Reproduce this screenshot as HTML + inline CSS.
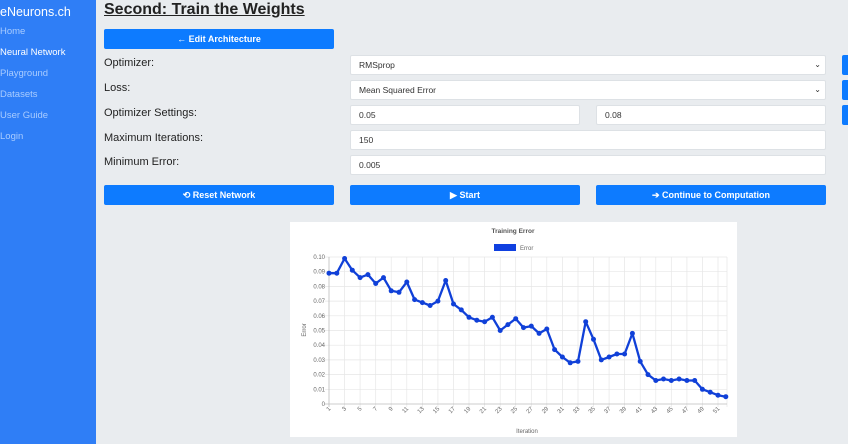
<!DOCTYPE html>
<html><head><meta charset="utf-8"><style>
*{margin:0;padding:0;box-sizing:border-box}
body{width:848px;height:444px;overflow:hidden;background:#e9ecef;font-family:"Liberation Sans",sans-serif;position:relative}
.side{position:absolute;left:0;top:0;width:96px;height:444px;background:#2f7ef6}
.side div{position:absolute;left:0;font-size:9.5px;color:#a9ccff}
.brand{color:#fff!important;font-size:12.5px!important;top:5px}
.a{position:absolute}
h1{position:absolute;left:104px;top:1px;font-size:16px;font-weight:bold;color:#222;text-decoration:underline}
.btn{position:absolute;background:#0d7bff;color:#fff;font-size:9px;font-weight:bold;text-align:center;line-height:20px;height:20px;border-radius:2px}
.lbl{position:absolute;left:104px;font-size:11px;color:#222}
.in{position:absolute;background:#fff;border:1px solid #dde1e5;border-radius:2px;height:20px;font-size:8.5px;color:#333;line-height:18px;padding-left:8px}
.tab{position:absolute;left:842px;width:8px;height:20px;background:#0d7bff;border-radius:2px}
.chev{position:absolute;right:4px;top:0;font-size:8px}
</style></head><body>
<div class="side">
<div class="brand">eNeurons.ch</div>
<div style="top:26px">Home</div>
<div style="top:47px;color:#fff">Neural Network</div>
<div style="top:68px">Playground</div>
<div style="top:89px">Datasets</div>
<div style="top:110px">User Guide</div>
<div style="top:131px">Login</div>
</div>
<h1>Second: Train the Weights</h1>
<div class="btn" style="left:104px;top:29px;width:230px">← Edit Architecture</div>
<div class="lbl" style="top:57px">Optimizer:</div>
<div class="lbl" style="top:82px">Loss:</div>
<div class="lbl" style="top:107px">Optimizer Settings:</div>
<div class="lbl" style="top:132px">Maximum Iterations:</div>
<div class="lbl" style="top:156px">Minimum Error:</div>
<div class="in" style="left:350px;top:55px;width:476px">RMSprop<span class="chev">⌄</span></div>
<div class="in" style="left:350px;top:80px;width:476px">Mean Squared Error<span class="chev">⌄</span></div>
<div class="in" style="left:350px;top:105px;width:230px">0.05</div>
<div class="in" style="left:596px;top:105px;width:230px">0.08</div>
<div class="in" style="left:350px;top:130px;width:476px">150</div>
<div class="in" style="left:350px;top:155px;width:476px">0.005</div>
<div class="tab" style="top:55px"></div><div class="tab" style="top:80px"></div><div class="tab" style="top:105px"></div>
<div class="btn" style="left:104px;top:185px;width:230px">⟲ Reset Network</div>
<div class="btn" style="left:350px;top:185px;width:230px">▶ Start</div>
<div class="btn" style="left:596px;top:185px;width:230px">➔ Continue to Computation</div>
<div class="a" style="left:290px;top:222px;width:447px;height:215px;background:#fff"></div>
<svg class="a" style="left:0;top:0" width="848" height="444" font-family="Liberation Sans,sans-serif">
<text x="513" y="233" font-size="6.5" fill="#555" text-anchor="middle" font-weight="bold">Training Error</text>
<rect x="494" y="244" width="22" height="7" fill="#1040e0"/>
<text x="520" y="250" font-size="6" fill="#666">Error</text>
<g stroke="#e6e6e6" stroke-width="0.7">
<line x1="325" y1="257" x2="727" y2="257"/><line x1="325" y1="271.7" x2="727" y2="271.7"/><line x1="325" y1="286.4" x2="727" y2="286.4"/><line x1="325" y1="301.1" x2="727" y2="301.1"/><line x1="325" y1="315.8" x2="727" y2="315.8"/><line x1="325" y1="330.5" x2="727" y2="330.5"/><line x1="325" y1="345.2" x2="727" y2="345.2"/><line x1="325" y1="359.9" x2="727" y2="359.9"/><line x1="325" y1="374.6" x2="727" y2="374.6"/><line x1="325" y1="389.3" x2="727" y2="389.3"/>
<line x1="344.6" y1="257" x2="344.6" y2="407"/><line x1="360.1" y1="257" x2="360.1" y2="407"/><line x1="375.7" y1="257" x2="375.7" y2="407"/><line x1="391.2" y1="257" x2="391.2" y2="407"/><line x1="406.8" y1="257" x2="406.8" y2="407"/><line x1="422.4" y1="257" x2="422.4" y2="407"/><line x1="437.9" y1="257" x2="437.9" y2="407"/><line x1="453.5" y1="257" x2="453.5" y2="407"/><line x1="469" y1="257" x2="469" y2="407"/><line x1="484.6" y1="257" x2="484.6" y2="407"/><line x1="500.2" y1="257" x2="500.2" y2="407"/><line x1="515.7" y1="257" x2="515.7" y2="407"/><line x1="531.3" y1="257" x2="531.3" y2="407"/><line x1="546.8" y1="257" x2="546.8" y2="407"/><line x1="562.4" y1="257" x2="562.4" y2="407"/><line x1="578" y1="257" x2="578" y2="407"/><line x1="593.5" y1="257" x2="593.5" y2="407"/><line x1="609.1" y1="257" x2="609.1" y2="407"/><line x1="624.6" y1="257" x2="624.6" y2="407"/><line x1="640.2" y1="257" x2="640.2" y2="407"/><line x1="655.8" y1="257" x2="655.8" y2="407"/><line x1="671.3" y1="257" x2="671.3" y2="407"/><line x1="686.9" y1="257" x2="686.9" y2="407"/><line x1="702.4" y1="257" x2="702.4" y2="407"/><line x1="718" y1="257" x2="718" y2="407"/><line x1="727" y1="257" x2="727" y2="407"/>
</g>
<line x1="329" y1="257" x2="329" y2="407" stroke="#bbb" stroke-width="0.8"/>
<line x1="325" y1="404" x2="727" y2="404" stroke="#bbb" stroke-width="0.8"/>
<g font-size="6" fill="#666" text-anchor="end">
<text x="325" y="259">0.10</text><text x="325" y="273.7">0.09</text><text x="325" y="288.4">0.08</text><text x="325" y="303.1">0.07</text><text x="325" y="317.8">0.06</text><text x="325" y="332.5">0.05</text><text x="325" y="347.2">0.04</text><text x="325" y="361.9">0.03</text><text x="325" y="376.6">0.02</text><text x="325" y="391.3">0.01</text><text x="325" y="406">0</text>
</g>
<g font-size="6" fill="#666" text-anchor="end">
<text transform="translate(331,409) rotate(-45)">1</text><text transform="translate(346.6,409) rotate(-45)">3</text><text transform="translate(362.1,409) rotate(-45)">5</text><text transform="translate(377.7,409) rotate(-45)">7</text><text transform="translate(393.2,409) rotate(-45)">9</text><text transform="translate(408.8,409) rotate(-45)">11</text><text transform="translate(424.4,409) rotate(-45)">13</text><text transform="translate(439.9,409) rotate(-45)">15</text><text transform="translate(455.5,409) rotate(-45)">17</text><text transform="translate(471,409) rotate(-45)">19</text><text transform="translate(486.6,409) rotate(-45)">21</text><text transform="translate(502.2,409) rotate(-45)">23</text><text transform="translate(517.7,409) rotate(-45)">25</text><text transform="translate(533.3,409) rotate(-45)">27</text><text transform="translate(548.8,409) rotate(-45)">29</text><text transform="translate(564.4,409) rotate(-45)">31</text><text transform="translate(580,409) rotate(-45)">33</text><text transform="translate(595.5,409) rotate(-45)">35</text><text transform="translate(611.1,409) rotate(-45)">37</text><text transform="translate(626.6,409) rotate(-45)">39</text><text transform="translate(642.2,409) rotate(-45)">41</text><text transform="translate(657.8,409) rotate(-45)">43</text><text transform="translate(673.3,409) rotate(-45)">45</text><text transform="translate(688.9,409) rotate(-45)">47</text><text transform="translate(704.4,409) rotate(-45)">49</text><text transform="translate(720,409) rotate(-45)">51</text>
</g>
<text x="527" y="433" font-size="6" fill="#666" text-anchor="middle">Iteration</text>
<text transform="translate(306,330) rotate(-90)" font-size="6" fill="#666" text-anchor="middle">Error</text>
<polyline fill="none" stroke="#1040d8" stroke-width="2.3" stroke-linejoin="round" points="329,273.2 336.8,273.2 344.6,258.5 352.3,270.2 360.1,277.6 367.9,274.6 375.7,283.5 383.5,277.6 391.2,290.8 399,292.3 406.8,282 414.6,299.6 422.4,302.6 430.1,305.5 437.9,301.1 445.7,280.5 453.5,304 461.3,309.9 469,317.3 476.8,320.2 484.6,321.7 492.4,317.3 500.2,330.5 507.9,324.6 515.7,318.7 523.5,327.6 531.3,326.1 539.1,333.4 546.8,329 554.6,349.6 562.4,357 570.2,362.8 578,361.4 585.7,321.7 593.5,339.3 601.3,359.9 609.1,357 616.9,354 624.6,354 632.4,333.4 640.2,361.4 648,374.6 655.8,380.5 663.5,379 671.3,380.5 679.1,379 686.9,380.5 694.7,380.5 702.4,389.3 710.2,392.2 718,395.2 725.8,396.7"/>
<g fill="#1040d8">
<circle cx="329" cy="273.2" r="2.5"/><circle cx="336.8" cy="273.2" r="2.5"/><circle cx="344.6" cy="258.5" r="2.5"/><circle cx="352.3" cy="270.2" r="2.5"/><circle cx="360.1" cy="277.6" r="2.5"/><circle cx="367.9" cy="274.6" r="2.5"/><circle cx="375.7" cy="283.5" r="2.5"/><circle cx="383.5" cy="277.6" r="2.5"/><circle cx="391.2" cy="290.8" r="2.5"/><circle cx="399" cy="292.3" r="2.5"/><circle cx="406.8" cy="282" r="2.5"/><circle cx="414.6" cy="299.6" r="2.5"/><circle cx="422.4" cy="302.6" r="2.5"/><circle cx="430.1" cy="305.5" r="2.5"/><circle cx="437.9" cy="301.1" r="2.5"/><circle cx="445.7" cy="280.5" r="2.5"/><circle cx="453.5" cy="304" r="2.5"/><circle cx="461.3" cy="309.9" r="2.5"/><circle cx="469" cy="317.3" r="2.5"/><circle cx="476.8" cy="320.2" r="2.5"/><circle cx="484.6" cy="321.7" r="2.5"/><circle cx="492.4" cy="317.3" r="2.5"/><circle cx="500.2" cy="330.5" r="2.5"/><circle cx="507.9" cy="324.6" r="2.5"/><circle cx="515.7" cy="318.7" r="2.5"/><circle cx="523.5" cy="327.6" r="2.5"/><circle cx="531.3" cy="326.1" r="2.5"/><circle cx="539.1" cy="333.4" r="2.5"/><circle cx="546.8" cy="329" r="2.5"/><circle cx="554.6" cy="349.6" r="2.5"/><circle cx="562.4" cy="357" r="2.5"/><circle cx="570.2" cy="362.8" r="2.5"/><circle cx="578" cy="361.4" r="2.5"/><circle cx="585.7" cy="321.7" r="2.5"/><circle cx="593.5" cy="339.3" r="2.5"/><circle cx="601.3" cy="359.9" r="2.5"/><circle cx="609.1" cy="357" r="2.5"/><circle cx="616.9" cy="354" r="2.5"/><circle cx="624.6" cy="354" r="2.5"/><circle cx="632.4" cy="333.4" r="2.5"/><circle cx="640.2" cy="361.4" r="2.5"/><circle cx="648" cy="374.6" r="2.5"/><circle cx="655.8" cy="380.5" r="2.5"/><circle cx="663.5" cy="379" r="2.5"/><circle cx="671.3" cy="380.5" r="2.5"/><circle cx="679.1" cy="379" r="2.5"/><circle cx="686.9" cy="380.5" r="2.5"/><circle cx="694.7" cy="380.5" r="2.5"/><circle cx="702.4" cy="389.3" r="2.5"/><circle cx="710.2" cy="392.2" r="2.5"/><circle cx="718" cy="395.2" r="2.5"/><circle cx="725.8" cy="396.7" r="2.5"/>
</g>
</svg>
</body></html>
